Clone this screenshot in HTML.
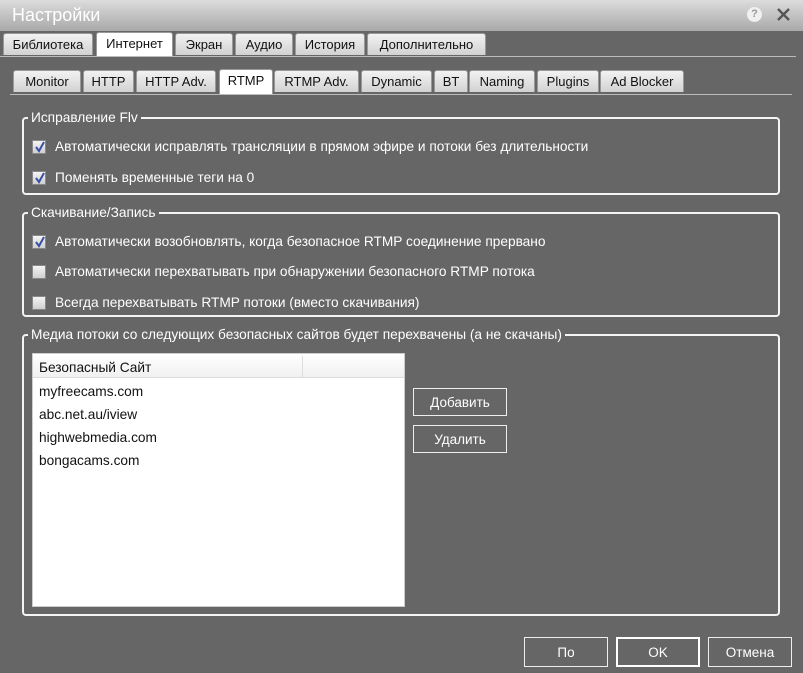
<!DOCTYPE html>
<html><head><meta charset="utf-8"><style>
*{box-sizing:border-box;margin:0;padding:0}
body{width:803px;height:673px;background:#666;font-family:"Liberation Sans","DejaVu Sans",sans-serif;font-size:13px;color:#fff;position:relative;overflow:hidden}
.a{position:absolute}
.title{left:0;top:0;width:803px;height:31px;background:linear-gradient(#dcdcdc,#a9a9a9);}
.title span{position:absolute;left:12px;top:5px;font-size:18px;color:#fff}
.tab{position:absolute;height:22px;background:linear-gradient(#f2f2f2,#d2d2d2);border:1px solid #999;border-bottom:none;border-radius:3px 3px 0 0;color:#111;text-align:center;line-height:22px;font-size:13px}
.tab.act{background:#fff;height:25px}
.line{position:absolute;height:1px;background:#bbb}
.grp{position:absolute;border:2px solid #f4f4f4;border-radius:4px}
.lbl{position:absolute;background:#666;padding:0 3px;color:#fff;line-height:15px;font-size:13.7px}
.cb{position:absolute;width:14px;height:14px;background:linear-gradient(#f4f4f4,#cfcfcf);border:1px solid #888}
.cb svg{position:absolute;left:1px;top:0}
.t{position:absolute;color:#fff;white-space:nowrap;font-size:13.7px}
.btn{position:absolute;border:1px solid #eee;color:#fff;text-align:center;font-size:13.5px}
</style></head><body>
<div class="a title"><span>Настройки</span>
<div class="a" style="left:747px;top:7px;width:15px;height:15px;border-radius:50%;background:#f0f0f0;color:#999;font-size:11px;text-align:center;line-height:15px;font-weight:bold">?</div>
<svg class="a" style="left:777px;top:8px" width="13" height="13"><path d="M1 1L12 12M12 1L1 12" stroke="#555" stroke-width="2.4"/></svg>
</div>
<div class="tab" style="left:3px;top:33px;width:90px">Библиотека</div>
<div class="tab act" style="left:96px;top:32px;width:77px">Интернет</div>
<div class="tab" style="left:175px;top:33px;width:58px">Экран</div>
<div class="tab" style="left:235px;top:33px;width:58px">Аудио</div>
<div class="tab" style="left:295px;top:33px;width:70px">История</div>
<div class="tab" style="left:367px;top:33px;width:119px">Дополнительно</div>
<div class="line" style="left:0;top:56px;width:796px"></div>
<div class="tab" style="left:13px;top:70px;width:68px">Monitor</div>
<div class="tab" style="left:83px;top:70px;width:51px">HTTP</div>
<div class="tab" style="left:136px;top:70px;width:80px">HTTP Adv.</div>
<div class="tab act" style="left:219px;top:69px;width:54px">RTMP</div>
<div class="tab" style="left:274px;top:70px;width:85px">RTMP Adv.</div>
<div class="tab" style="left:361px;top:70px;width:71px">Dynamic</div>
<div class="tab" style="left:434px;top:70px;width:34px">BT</div>
<div class="tab" style="left:469px;top:70px;width:66px">Naming</div>
<div class="tab" style="left:537px;top:70px;width:62px">Plugins</div>
<div class="tab" style="left:600px;top:70px;width:84px">Ad Blocker</div>
<div class="line" style="left:10px;top:94px;width:782px"></div>

<div class="grp" style="left:22px;top:117px;width:758px;height:78px"></div>
<div class="lbl" style="left:28px;top:110px">Исправление Flv</div>
<div class="cb" style="left:32px;top:140px"><svg width="12" height="12"><path d="M2 6L5 10L10 1" stroke="#3a4fa8" stroke-width="2" fill="none"/></svg></div>
<div class="t" style="left:55px;top:139px">Автоматически исправлять трансляции в прямом эфире и потоки без длительности</div>
<div class="cb" style="left:32px;top:171px"><svg width="12" height="12"><path d="M2 6L5 10L10 1" stroke="#3a4fa8" stroke-width="2" fill="none"/></svg></div>
<div class="t" style="left:55px;top:170px">Поменять временные теги на 0</div>

<div class="grp" style="left:22px;top:212px;width:758px;height:105px"></div>
<div class="lbl" style="left:28px;top:205px">Скачивание/Запись</div>
<div class="cb" style="left:32px;top:235px"><svg width="12" height="12"><path d="M2 6L5 10L10 1" stroke="#3a4fa8" stroke-width="2" fill="none"/></svg></div>
<div class="t" style="left:55px;top:234px">Автоматически возобновлять, когда безопасное RTMP соединение прервано</div>
<div class="cb" style="left:32px;top:265px"></div>
<div class="t" style="left:55px;top:264px">Автоматически перехватывать при обнаружении безопасного RTMP потока</div>
<div class="cb" style="left:32px;top:296px"></div>
<div class="t" style="left:55px;top:295px">Всегда перехватывать RTMP потоки (вместо скачивания)</div>

<div class="grp" style="left:22px;top:334px;width:758px;height:282px"></div>
<div class="lbl" style="left:28px;top:327px">Медиа потоки со следующих безопасных сайтов будет перехвачены (а не скачаны)</div>
<div class="a" style="left:32px;top:353px;width:373px;height:254px;background:#fff;border:1px solid #ccc"></div>
<div class="a" style="left:33px;top:354px;width:371px;height:24px;background:linear-gradient(#fff,#f0f0f0);border-bottom:1px solid #ddd"></div>
<div class="a" style="left:302px;top:356px;width:1px;height:21px;background:#ddd"></div>
<div class="t" style="left:39px;top:360px;color:#111">Безопасный Сайт</div>
<div class="t" style="left:39px;top:384px;color:#111">myfreecams.com</div>
<div class="t" style="left:39px;top:407px;color:#111">abc.net.au/iview</div>
<div class="t" style="left:39px;top:430px;color:#111">highwebmedia.com</div>
<div class="t" style="left:39px;top:453px;color:#111">bongacams.com</div>
<div class="btn" style="left:413px;top:388px;width:94px;height:28px;line-height:28px">Добавить</div>
<div class="btn" style="left:413px;top:425px;width:94px;height:28px;line-height:27px">Удалить</div>

<div class="btn" style="left:524px;top:637px;width:84px;height:30px;line-height:29px">По</div>
<div class="btn" style="left:616px;top:637px;width:84px;height:30px;line-height:27px;border:2px solid #fff">OK</div>
<div class="btn" style="left:708px;top:637px;width:84px;height:30px;line-height:29px">Отмена</div>
</body></html>
